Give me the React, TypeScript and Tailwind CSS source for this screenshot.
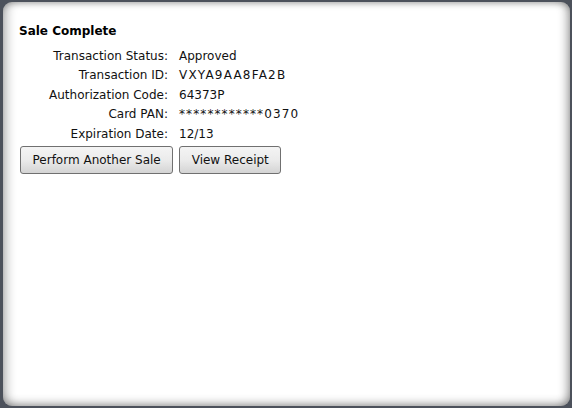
const rows = [
  ['Transaction Status:', 'Approved', ''],
  ['Transaction ID:', 'VXYA9AA8FA2B', 'tracking-[1.2px]'],
  ['Authorization Code:', '64373P', ''],
  ['Card PAN:', '************0370', 'tracking-[1.1px]'],
  ['Expiration Date:', '12/13', ''],
]

function Button({ label }: { label: string }) {
  return (
    <button className="h-[28px] px-[11.5px] rounded-[3px] border border-[#707070] bg-gradient-to-b from-[#f4f4f4] via-[#ebebeb] to-[#d4d4d4] text-[12px] text-[#111]">
      {label}
    </button>
  )
}

export default function App() {
  return (
    <div className="w-[572px] h-[408px] bg-[#4c515b] pt-[2px] pl-[3px] pr-[2px] pb-[2px] flex font-['DejaVu_Sans',Verdana,sans-serif]">
      <div className="flex-1 rounded-[9px] bg-white shadow-[inset_10px_0_10px_-5px_rgba(0,0,0,0.22),inset_-8px_0_8px_-4px_rgba(0,0,0,0.28),inset_0_5px_6px_-3px_rgba(0,0,0,0.25),inset_0_-7px_8px_-4px_rgba(0,0,0,0.3)] pl-[16px] pt-[21px]">
        <h1 className="text-[12px] font-bold text-black leading-[16px]">Sale Complete</h1>
        <div className="mt-[7.5px] grid grid-cols-[149px_auto] gap-x-[11px] text-[12px] text-[#111] leading-[19.6px] w-max">
          {rows.map(([label, value, extra]) => (
            <div key={label} className="contents">
              <span className="text-right">{label}</span>
              <span className={extra}>{value}</span>
            </div>
          ))}
        </div>
        <div className="mt-[2px] flex gap-[6px] pl-[1px]">
          <Button label="Perform Another Sale" />
          <Button label="View Receipt" />
        </div>
      </div>
    </div>
  )
}
